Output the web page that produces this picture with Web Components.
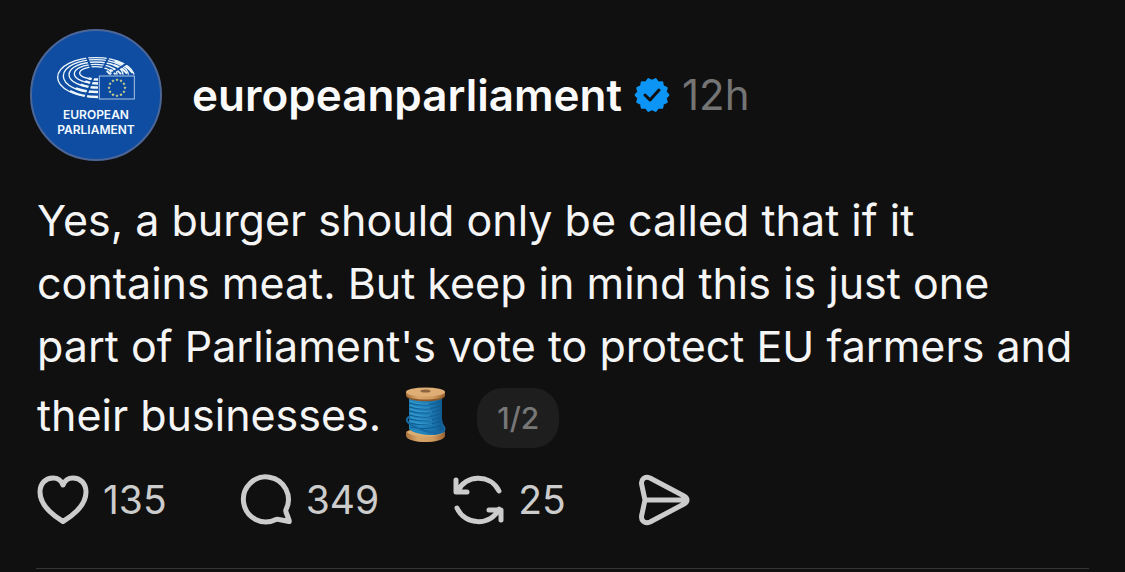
<!DOCTYPE html>
<html lang="en">
<head>
<meta charset="UTF-8">
<meta name="viewport" content="width=device-width, initial-scale=1">
<title>europeanparliament</title>
<style>
  body {
    margin: 0;
    background: #101010;
    color: #f5f5f5;
    font-family: Inter, "Liberation Sans", sans-serif;
  }
</style>
</head>
<body>
<thread-post>
  <post-author slot="author" name="europeanparliament" time="12h"></post-author>
  Yes, a burger should only be called that if it contains meat. But keep in mind this is just one part of Parliament's vote to protect EU farmers and their businesses. <spool-emoji></spool-emoji> <thread-count>1/2</thread-count>
  <post-action slot="actions" icon="like" label="Like">135</post-action>
  <post-action slot="actions" icon="reply" label="Reply">349</post-action>
  <post-action slot="actions" icon="repost" label="Repost">25</post-action>
  <post-action slot="actions" icon="share" label="Share"></post-action>
</thread-post>

<script>
class ParliamentAvatar extends HTMLElement {
  constructor() {
    super();
    this.attachShadow({ mode: 'open' });
    this.shadowRoot.innerHTML = `
      <style>
        :host {
          display: flex;
          flex-direction: column;
          align-items: center;
          box-sizing: border-box;
          width: 132px;
          height: 132px;
          padding-top: 25px;
          border: 2px solid #4b6697;
          border-radius: 50%;
          background: #0f4da3;
          color: #f4fbff;
          font-size: 12px;
          font-weight: 600;
          line-height: 15px;
          text-align: center;
        }
        svg { display: block; width: 80px; height: 44px; margin-bottom: 7px; }
      </style>
      <svg viewBox="108 107 240 132" aria-hidden="true">
        <g fill="none" stroke="#eef7fb">
          <ellipse cx="228" cy="171" rx="115" ry="59" stroke-width="4"/>
          <ellipse cx="228" cy="167" rx="98" ry="49" stroke-width="4"/>
          <ellipse cx="228" cy="163" rx="81" ry="38" stroke-width="4"/>
          <ellipse cx="227" cy="160" rx="64" ry="28" stroke-width="4"/>
          <ellipse cx="226" cy="158" rx="47" ry="19" stroke-width="4"/>
          <path stroke-width="7" d="M150 212Q186 230 234 230M168 204Q196 215 234 215M182 193Q204 202 234 202M196 183Q212 190 234 190M206 174Q218 178 234 178"/>
          <path stroke-width="6" d="M284 122Q320 134 338 158M282 134Q308 143 321 160M278 144Q295 150 303 162M270 148Q281 153 287 163M260 152Q267 156 270 163"/>
        </g>
        <path fill="none" stroke="#0f4da3" stroke-width="6" d="M199 105L214 147M267 107L247 149M325 126L276 158M193 239L220 172"/>
        <rect x="234" y="163" width="114" height="78" fill="#0f4da3"/>
        <rect x="238" y="167" width="105" height="69" fill="#0c49a0" stroke="#a9c5e5" stroke-width="3"/>
        <g class="stars" fill="#d6d98a"></g>
      </svg>
      <div>EUROPEAN<br>PARLIAMENT</div>
    `;
    this.drawStars();
  }

  // Twelve stars on a circle in the middle of the flag
  drawStars() {
    const stars = this.shadowRoot.querySelector('.stars');
    let markup = '';
    for (let i = 0; i < 12; i++) {
      const angle = i * Math.PI / 6;
      const x = 291 + 24 * Math.sin(angle);
      const y = 202 - 24 * Math.cos(angle);
      markup += `<path transform="translate(${x.toFixed(1)} ${y.toFixed(1)})" d="M0-5L1.5-1.5L5-1.5L2.2 1L3.2 5L0 2.6L-3.2 5L-2.2 1L-5-1.5L-1.5-1.5Z"/>`;
    }
    stars.innerHTML = markup;
  }
}

class VerifiedBadge extends HTMLElement {
  constructor() {
    super();
    this.attachShadow({ mode: 'open' });
    this.shadowRoot.innerHTML = `
      <style>
        :host { display: block; width: 36px; height: 36px; }
        svg { display: block; width: 100%; height: 100%; }
      </style>
      <svg viewBox="0 0 36 36" role="img" aria-label="Verified">
        <path class="seal" fill="#0d95f6" stroke="#0d95f6" stroke-width="2" stroke-linejoin="round"/>
        <path fill="none" stroke="#101010" stroke-width="3" stroke-linecap="round" stroke-linejoin="round" d="M11 18L16 23L25 13"/>
      </svg>
    `;
    this.shadowRoot.querySelector('.seal').setAttribute('d', this.sealPath(14));
  }

  // Points sit either side of the vertical axis, with a notch at the top
  sealPath(points) {
    let d = '';
    for (let i = 0; i < points * 2; i++) {
      const radius = i % 2 === 0 ? 14 : 16.4;
      const angle = i * Math.PI / points;
      d += (i ? 'L' : 'M') + (18 + radius * Math.sin(angle)).toFixed(2) + ' ' + (18 - radius * Math.cos(angle)).toFixed(2);
    }
    return d + 'Z';
  }
}

class PostAuthor extends HTMLElement {
  constructor() {
    super();
    this.attachShadow({ mode: 'open' });
    this.shadowRoot.innerHTML = `
      <style>
        :host {
          display: flex;
          align-items: center;
          gap: 30px;
        }
        .line {
          display: flex;
          align-items: center;
          gap: 12px;
          font-size: 42px;
          line-height: 52px;
        }
        a {
          color: #fafafa;
          font-size: 44px;
          font-weight: 600;
          text-decoration: none;
        }
        time { color: #747474; }
      </style>
      <parliament-avatar></parliament-avatar>
      <div class="line">
        <a href="#"></a>
        <verified-badge></verified-badge>
        <time></time>
      </div>
    `;
  }

  connectedCallback() {
    this.shadowRoot.querySelector('a').textContent = this.getAttribute('name');
    this.shadowRoot.querySelector('time').textContent = this.getAttribute('time');
  }
}

class SpoolEmoji extends HTMLElement {
  constructor() {
    super();
    this.attachShadow({ mode: 'open' });
    this.shadowRoot.innerHTML = `
      <style>
        :host {
          display: inline-block;
          width: 42px;
          height: 56px;
          margin: 9px 18px 0 12px;
          vertical-align: -12px;
        }
        svg { display: block; width: 100%; height: 100%; }
      </style>
      <svg viewBox="0 0 42 56" role="img" aria-label="Spool of thread">
        <defs>
          <linearGradient id="wood" x1="0" x2="1">
            <stop offset="0" stop-color="#a8703a"/>
            <stop offset=".3" stop-color="#d9a66a"/>
            <stop offset=".7" stop-color="#cf9a5e"/>
            <stop offset="1" stop-color="#9a6230"/>
          </linearGradient>
          <linearGradient id="thread" x1="0" x2="1">
            <stop offset="0" stop-color="#2083b8"/>
            <stop offset=".3" stop-color="#2389c2"/>
            <stop offset=".7" stop-color="#1a72ac"/>
            <stop offset="1" stop-color="#10568b"/>
          </linearGradient>
        </defs>
        <path fill="url(#wood)" d="M1 45C3 41 38 41 40 45V49C38 57 3 57 1 49Z"/>
        <path fill="#dcad72" d="M2 45C7 40 34 40 39 45C35 51 6 51 2 45Z"/>
        <path fill="url(#thread)" d="M4 10H37V32L39 40C40 47 33 48 28 48C18 48 8 46 4 42Z"/>
        <path fill="none" stroke="#0d5b91" stroke-width="1" d="M4 16Q21 21 37 14M4 20Q21 25 37 18M4 24Q21 29 37 22M4 28Q21 33 37 26M4 32Q21 36 37 30M4 36Q20 40 37 34M5 40Q22 44 37 38"/>
        <path fill="none" stroke="#44a2d2" stroke-width=".7" d="M5 14Q13 18 24 17M5 18Q13 22 25 21M5 22Q15 26 27 25M5 26Q13 30 25 29M5 30Q15 34 27 33M5 34Q15 38 27 37"/>
        <path fill="none" stroke="#1768a0" stroke-width="2" stroke-linecap="round" d="M4 30C0 32 2 36 7 38C16 44 28 47 38 45C41 42 39 39 37 38"/>
        <path fill="#8a5728" d="M1 6H40V9C38 16 3 16 1 9Z"/>
        <path fill="url(#wood)" d="M1 5H40V8C37 14 4 14 1 8Z"/>
        <ellipse cx="20.5" cy="5" rx="19.5" ry="4.5" fill="#deae75"/>
        <ellipse cx="20.5" cy="4" rx="5" ry="1.6" fill="#8e653f"/>
      </svg>
    `;
  }
}

class ThreadCount extends HTMLElement {
  constructor() {
    super();
    this.attachShadow({ mode: 'open' });
    this.shadowRoot.innerHTML = `
      <style>
        :host {
          display: inline-block;
          box-sizing: border-box;
          min-width: 82px;
          height: 60px;
          padding: 0 16px;
          border-radius: 26px;
          background: #1e1e1e;
          color: #777;
          font-size: 30px;
          font-weight: 500;
          line-height: 60px;
          text-align: center;
          vertical-align: 2px;
        }
      </style>
      <slot></slot>
    `;
  }
}

const actionIcons = {
  like: '<path d="M26 47.5C20 44 3 33 3 18C3 9 9 4 16 4C21 4 24.5 7 26 11C27.5 7 31 4 36 4C43 4 49 9 49 18C49 33 32 44 26 47.5Z"/>',
  reply: '<path d="M46 35.5A22.5 22.5 0 1 0 36 45.5Q37 45 39 45.5L49 47.5Q49.5 47.5 49 46L46 38Q45.5 36.5 46 35.5Z"/>',
  repost: '<path stroke-linecap="round" d="M6 17C13 1 38 -1 47 17M4 6V18H15M5 34C13 52 39 52 47 35M37 36H49V46"/>',
  share: '<path d="M6 26L3 12C1 5 6 2 11 4L45 22C49 24 49 28 45 30L11 48C6 50 1 47 3 40ZM6 26H47"/>'
};

class PostAction extends HTMLElement {
  constructor() {
    super();
    this.attachShadow({ mode: 'open' });
    this.shadowRoot.innerHTML = `
      <style>
        :host { display: block; }
        button {
          display: flex;
          align-items: center;
          gap: 14px;
          padding: 0;
          border: 0;
          background: none;
          color: #ccc;
          font: inherit;
          font-size: 39px;
          line-height: 52px;
          cursor: pointer;
        }
        svg {
          display: block;
          width: 52px;
          height: 52px;
          fill: none;
          stroke: currentColor;
          stroke-width: 5;
          stroke-linejoin: round;
          overflow: visible;
        }
      </style>
      <button type="button">
        <svg viewBox="0 0 52 52" aria-hidden="true"></svg>
        <slot></slot>
      </button>
    `;
  }

  connectedCallback() {
    this.shadowRoot.querySelector('svg').innerHTML = actionIcons[this.getAttribute('icon')];
    this.shadowRoot.querySelector('button').title = this.getAttribute('label');
  }
}

class ThreadPost extends HTMLElement {
  constructor() {
    super();
    this.attachShadow({ mode: 'open' });
    this.shadowRoot.innerHTML = `
      <style>
        :host { display: block; padding: 29px 36px 0; }
        header { margin-left: -6px; }
        p {
          margin: 28px 0 26px;
          padding: 0 8px 0 1px;
          font-size: 43px;
          line-height: 63px;
        }
        footer {
          display: flex;
          gap: 73px;
          padding: 0 0 42px 1px;
          border-bottom: 1px solid #363638;
        }
      </style>
      <article>
        <header><slot name="author"></slot></header>
        <p><slot></slot></p>
        <footer><slot name="actions"></slot></footer>
      </article>
    `;
  }
}

customElements.define('parliament-avatar', ParliamentAvatar);
customElements.define('verified-badge', VerifiedBadge);
customElements.define('post-author', PostAuthor);
customElements.define('spool-emoji', SpoolEmoji);
customElements.define('thread-count', ThreadCount);
customElements.define('post-action', PostAction);
customElements.define('thread-post', ThreadPost);
</script>
</body>
</html>
